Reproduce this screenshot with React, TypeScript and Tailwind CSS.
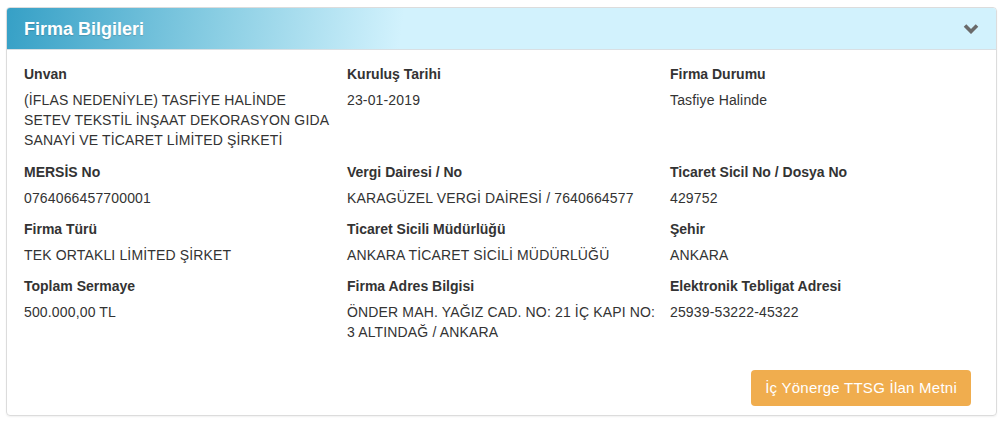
type Field = { label: string; lines: string[] }

const rows: Field[][] = [
  [
    { label: 'Unvan', lines: ['(İFLAS NEDENİYLE) TASFİYE HALİNDE', 'SETEV TEKSTİL İNŞAAT DEKORASYON GIDA', 'SANAYİ VE TİCARET LİMİTED ŞİRKETİ'] },
    { label: 'Kuruluş Tarihi', lines: ['23-01-2019'] },
    { label: 'Firma Durumu', lines: ['Tasfiye Halinde'] },
  ],
  [
    { label: 'MERSİS No', lines: ['0764066457700001'] },
    { label: 'Vergi Dairesi / No', lines: ['KARAGÜZEL VERGİ DAİRESİ / 7640664577'] },
    { label: 'Ticaret Sicil No / Dosya No', lines: ['429752'] },
  ],
  [
    { label: 'Firma Türü', lines: ['TEK ORTAKLI LİMİTED ŞİRKET'] },
    { label: 'Ticaret Sicili Müdürlüğü', lines: ['ANKARA TİCARET SİCİLİ MÜDÜRLÜĞÜ'] },
    { label: 'Şehir', lines: ['ANKARA'] },
  ],
  [
    { label: 'Toplam Sermaye', lines: ['500.000,00 TL'] },
    { label: 'Firma Adres Bilgisi', lines: ['ÖNDER MAH. YAĞIZ CAD. NO: 21 İÇ KAPI NO:', '3 ALTINDAĞ / ANKARA'] },
    { label: 'Elektronik Tebligat Adresi', lines: ['25939-53222-45322'] },
  ],
]

export default function App() {
  return (
    <div className="bg-white w-[1007px] h-[425px] pt-[7px] pl-[6px] font-['Liberation_Sans',Arial,sans-serif] text-[14px] leading-5 text-[#333]">
      <div className="w-[991px] h-[409px] border border-[#dcdcdc] rounded-[4px] shadow-[0_1px_2px_rgba(0,0,0,0.06)] overflow-hidden flex flex-col">
        <div className="h-[42px] shrink-0 flex items-center justify-between pl-[17px] pr-[17px] border-b border-[#d9dfe3] bg-[linear-gradient(98deg,#36a0c6_0%,#8ccfe4_22%,#d2f2fd_40%,#d2f2fd_100%)]">
          <span className="text-white font-bold text-[18px] [text-shadow:0_1px_1px_rgba(0,0,0,0.15)]">Firma Bilgileri</span>
          <svg width="16" height="11" viewBox="0 0 16 11" className="text-[#6a6a6a]">
            <polyline points="2,2.5 8,8.5 14,2.5" fill="none" stroke="currentColor" strokeWidth="3.6" strokeLinejoin="miter" />
          </svg>
        </div>
        <div className="flex-1 pl-[17px] pt-[14px] flex flex-col tracking-[0.15px]">
          {rows.map((row, i) => (
            <div key={i} className={`grid grid-cols-[323px_323px_323px] ${i === 0 ? 'mb-[12px]' : 'mb-[11px]'}`}>
              {row.map((f) => (
                <div key={f.label}>
                  <div className="font-bold mb-[6px] tracking-normal">{f.label}</div>
                  {f.lines.map((l) => (
                    <div key={l}>{l}</div>
                  ))}
                </div>
              ))}
            </div>
          ))}
          <div className="flex justify-end pr-[25px] mt-auto mb-[9px]">
            <button className="h-[36px] px-[14px] rounded-[4px] bg-[#f0ad4e] text-white text-[15px] tracking-[0.25px]">
              İç Yönerge TTSG İlan Metni
            </button>
          </div>
        </div>
      </div>
    </div>
  )
}
